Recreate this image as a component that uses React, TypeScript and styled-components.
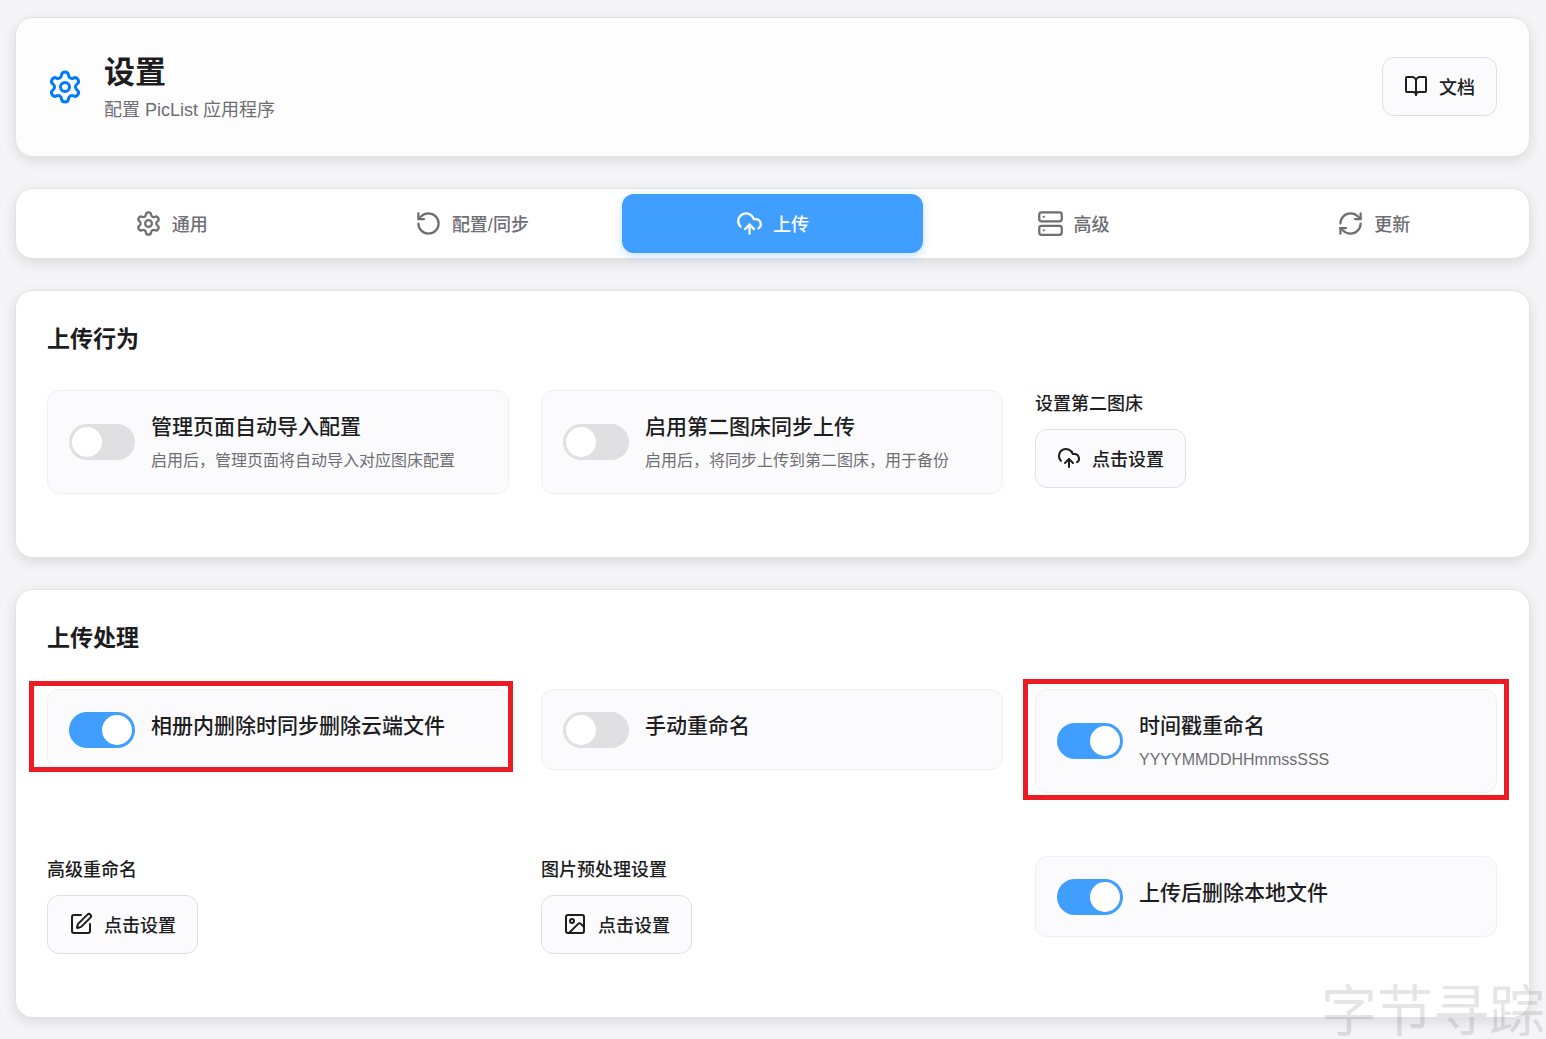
import React, { useState } from 'react';
import styled, { createGlobalStyle } from 'styled-components';
import {
  BookOpen,
  CloudUpload,
  Image as ImageIcon,
  RefreshCw,
  RotateCcw,
  Server,
  Settings,
  SquarePen,
} from 'lucide-react';

const color = {
  page: '#f5f5f7',
  surface: '#ffffff',
  header: '#fdfdfd',
  inset: '#fbfbfd',
  insetBorder: '#f0f0f2',
  border: '#e3e3e5',
  text: '#1d1d1f',
  muted: '#6e6e73',
  accent: '#409eff',
  brand: '#007aff',
  off: '#e0e0e2',
  mark: '#ed1c24',
};

const GlobalStyle = createGlobalStyle`
  *, *::before, *::after { box-sizing: border-box; }
  body {
    margin: 0;
    background: ${color.page};
    color: ${color.text};
    font-family: "Liberation Sans", "Noto Sans CJK SC", sans-serif;
  }
  button, input { font: inherit; color: inherit; }
  h1, h2, p { margin: 0; }
`;

const Page = styled.main`
  display: flex;
  flex-direction: column;
  gap: 31px;
  padding: 17px 16px 16px 15px;
`;

const Panel = styled.section`
  border: 1px solid ${color.border};
  border-radius: 18px;
  background: ${color.surface};
  box-shadow: 0 4px 14px rgba(0, 0, 0, 0.11);
`;

const Header = styled(Panel).attrs({ as: 'header' })`
  display: flex;
  align-items: center;
  justify-content: space-between;
  padding: 31px 32px 32px 31px;
  background: ${color.header};
`;

const Brand = styled.div`
  display: flex;
  align-items: center;
  gap: 21px;

  svg {
    color: ${color.brand};
  }
`;

const PageTitle = styled.h1`
  font-size: 31px;
  line-height: 47px;
  font-weight: 700;
`;

const PageSubtitle = styled.p`
  font-size: 18px;
  line-height: 28px;
  color: ${color.muted};
`;

const ActionButton = styled.button`
  display: inline-flex;
  align-items: center;
  gap: 11px;
  height: 59px;
  padding: 0 21px 2px;
  border: 1px solid ${color.off};
  border-radius: 12px;
  background: ${color.inset};
  font-size: 18px;
  font-weight: 500;
  cursor: pointer;
`;

const TabBar = styled(Panel).attrs({ as: 'nav' })`
  display: grid;
  grid-template-columns: repeat(5, 1fr);
  padding: 5px;
`;

const TabButton = styled.button<{ $active: boolean }>`
  display: flex;
  align-items: center;
  justify-content: center;
  gap: 10px;
  height: 59px;
  padding: 0 6px 1px;
  border: 0;
  border-radius: 12px;
  background: ${(p) => (p.$active ? color.accent : 'transparent')};
  box-shadow: ${(p) => (p.$active ? '0 3px 10px rgba(64, 158, 255, 0.3)' : 'none')};
  color: ${(p) => (p.$active ? '#ffffff' : color.muted)};
  font-size: 18px;
  font-weight: 500;
  cursor: pointer;
`;

const Section = styled(Panel)`
  padding: 31px 32px 63px 31px;
`;

const SectionTitle = styled.h2`
  margin-bottom: 33px;
  font-size: 23px;
  line-height: 35px;
  font-weight: 700;
`;

const Grid = styled.div`
  display: grid;
  grid-template-columns: repeat(3, 1fr);
  align-items: start;
  gap: 63px 32px;
`;

const SwitchCard = styled.label`
  position: relative;
  display: flex;
  align-items: center;
  gap: 16px;
  padding: 21px;
  border: 1px solid ${color.insetBorder};
  border-radius: 12px;
  background: ${color.inset};
  cursor: pointer;
`;

const Switch = styled.input.attrs({ type: 'checkbox', role: 'switch' })`
  appearance: none;
  display: flex;
  flex: none;
  width: 66px;
  height: 36px;
  margin: 0;
  padding: 3px;
  border-radius: 18px;
  background: ${color.off};
  cursor: pointer;

  &::before {
    content: '';
    width: 30px;
    height: 30px;
    border-radius: 50%;
    background: #ffffff;
  }

  &:checked {
    justify-content: flex-end;
    background: ${color.accent};
  }
`;

const SwitchText = styled.span`
  display: flex;
  flex-direction: column;
  gap: 7px;
  min-height: 37px;
`;

const SwitchTitle = styled.span`
  font-size: 21px;
  line-height: 30px;
  font-weight: 500;
`;

const SwitchHint = styled.span`
  font-size: 16px;
  line-height: 23px;
  color: ${color.muted};
`;

const Highlight = styled.span<{ $inset: string }>`
  position: absolute;
  inset: ${(p) => p.$inset};
  border: 5px solid ${color.mark};
  pointer-events: none;
`;

const Field = styled.div`
  display: flex;
  flex-direction: column;
  align-items: flex-start;
  gap: 11px;
`;

const FieldLabel = styled.span`
  font-size: 18px;
  line-height: 28px;
  font-weight: 500;
`;

const Watermark = styled.div`
  position: fixed;
  right: 1px;
  bottom: 0;
  color: rgba(0, 0, 0, 0.1);
  font-size: 56px;
  line-height: 54px;
  pointer-events: none;
`;

const tabs = [
  { label: '通用', Icon: Settings },
  { label: '配置/同步', Icon: RotateCcw },
  { label: '上传', Icon: CloudUpload },
  { label: '高级', Icon: Server },
  { label: '更新', Icon: RefreshCw },
];

interface ToggleProps {
  title: string;
  hint?: string;
  on?: boolean;
  highlight?: string;
}

function Toggle({ title, hint, on = false, highlight }: ToggleProps) {
  return (
    <SwitchCard>
      <Switch defaultChecked={on} />
      <SwitchText>
        <SwitchTitle>{title}</SwitchTitle>
        {hint && <SwitchHint>{hint}</SwitchHint>}
      </SwitchText>
      {highlight && <Highlight $inset={highlight} />}
    </SwitchCard>
  );
}

interface ActionProps {
  id: string;
  label: string;
  Icon: React.ElementType;
}

function Action({ id, label, Icon }: ActionProps) {
  return (
    <Field>
      <FieldLabel id={id}>{label}</FieldLabel>
      <ActionButton type="button" aria-describedby={id}>
        <Icon size={24} />
        点击设置
      </ActionButton>
    </Field>
  );
}

export default function App() {
  const [active, setActive] = useState('上传');

  return (
    <>
      <GlobalStyle />
      <Page>
        <Header>
          <Brand>
            <Settings size={36} />
            <div>
              <PageTitle>设置</PageTitle>
              <PageSubtitle>配置 PicList 应用程序</PageSubtitle>
            </div>
          </Brand>
          <ActionButton type="button">
            <BookOpen size={24} />
            文档
          </ActionButton>
        </Header>

        <TabBar>
          {tabs.map(({ label, Icon }) => (
            <TabButton
              key={label}
              type="button"
              $active={label === active}
              onClick={() => setActive(label)}
            >
              <Icon size={27} strokeWidth={2} />
              {label}
            </TabButton>
          ))}
        </TabBar>

        <Section>
          <SectionTitle>上传行为</SectionTitle>
          <Grid>
            <Toggle title="管理页面自动导入配置" hint="启用后，管理页面将自动导入对应图床配置" />
            <Toggle title="启用第二图床同步上传" hint="启用后，将同步上传到第二图床，用于备份" />
            <Action id="second-host" label="设置第二图床" Icon={CloudUpload} />
          </Grid>
        </Section>

        <Section>
          <SectionTitle>上传处理</SectionTitle>
          <Grid>
            <Toggle title="相册内删除时同步删除云端文件" on highlight="-9px -5px -3px -19px" />
            <Toggle title="手动重命名" />
            <Toggle title="时间戳重命名" hint="YYYYMMDDHHmmssSSS" on highlight="-11px -13px -8px -13px" />
            <Action id="rename" label="高级重命名" Icon={SquarePen} />
            <Action id="preprocess" label="图片预处理设置" Icon={ImageIcon} />
            <Toggle title="上传后删除本地文件" on />
          </Grid>
        </Section>
      </Page>
      <Watermark>字节寻踪</Watermark>
    </>
  );
}
